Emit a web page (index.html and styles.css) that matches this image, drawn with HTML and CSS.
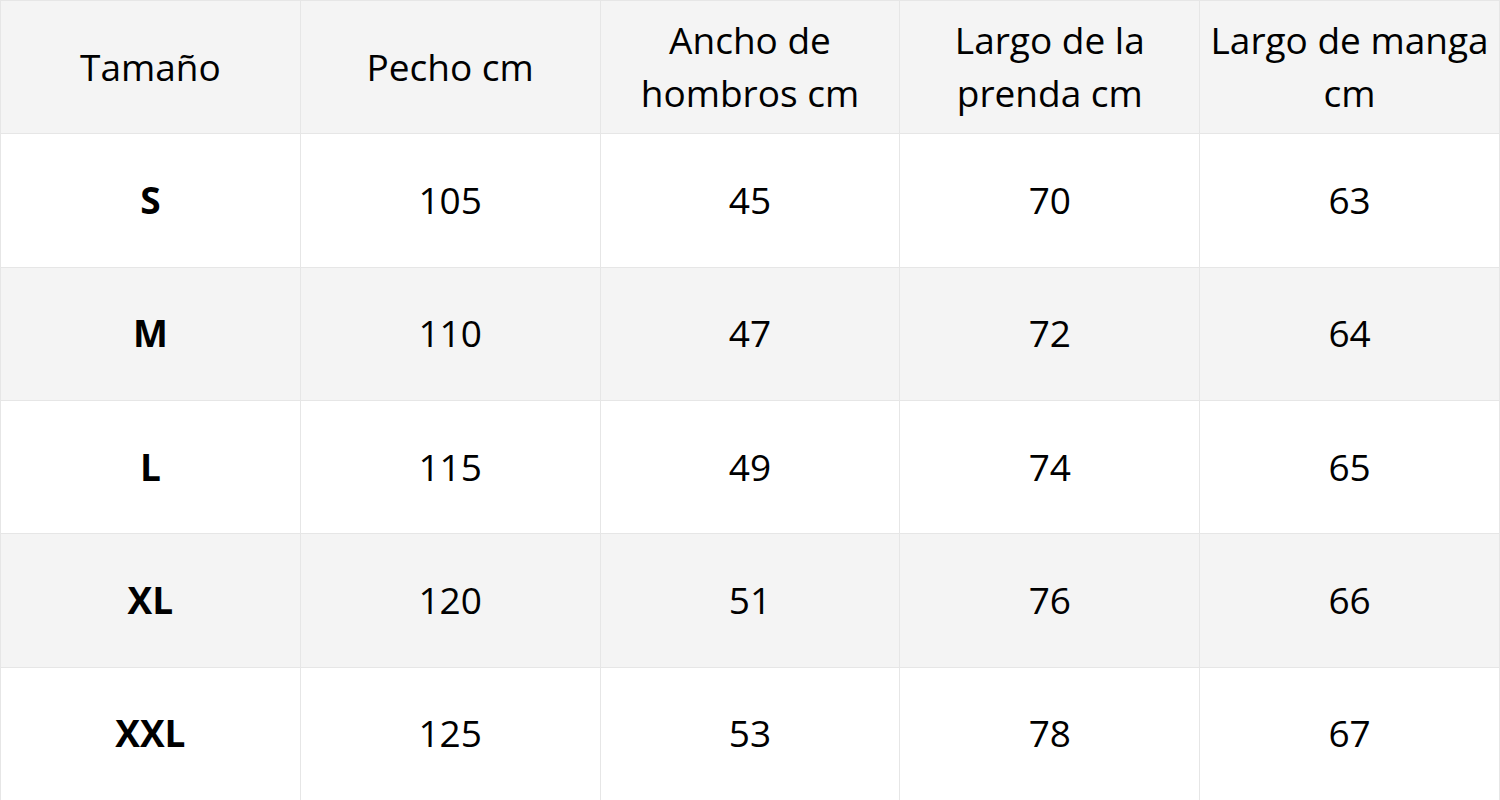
FILE: index.html
```html
<!DOCTYPE html>
<html lang="es">
<head>
<meta charset="utf-8">
<title>Tabla de tallas</title>
<link rel="stylesheet" href="styles.css">
</head>
<body>
<table class="sizes">
  <thead>
    <tr>
      <th>Tamaño</th>
      <th>Pecho cm</th>
      <th>Ancho de hombros cm</th>
      <th>Largo de la prenda cm</th>
      <th>Largo de manga cm</th>
    </tr>
  </thead>
  <tbody>
    <tr><td class="size">S</td><td>105</td><td>45</td><td>70</td><td>63</td></tr>
    <tr><td class="size">M</td><td>110</td><td>47</td><td>72</td><td>64</td></tr>
    <tr><td class="size">L</td><td>115</td><td>49</td><td>74</td><td>65</td></tr>
    <tr><td class="size">XL</td><td>120</td><td>51</td><td>76</td><td>66</td></tr>
    <tr><td class="size">XXL</td><td>125</td><td>53</td><td>78</td><td>67</td></tr>
  </tbody>
</table>
</body>
</html>
```
FILE: styles.css
```css
html, body {
  margin: 0;
  padding: 0;
  background: #fff;
}
.sizes {
  width: 1500px;
  height: 800px;
  border-collapse: collapse;
  table-layout: fixed;
  font-family: "Open Sans", "Liberation Sans", sans-serif;
  font-size: 37px;
  line-height: 53px;
  color: #000;
}
.sizes tr {
  height: 133.33px;
}
.sizes th,
.sizes td {
  border: 1px solid #e6e6e6;
  text-align: center;
  vertical-align: middle;
  padding: 0 6px 2px;
  font-weight: 400;
}
.sizes thead tr,
.sizes tbody tr:nth-child(even) {
  background: #f4f4f4;
}
.sizes td.size {
  font-weight: 700;
}
```
